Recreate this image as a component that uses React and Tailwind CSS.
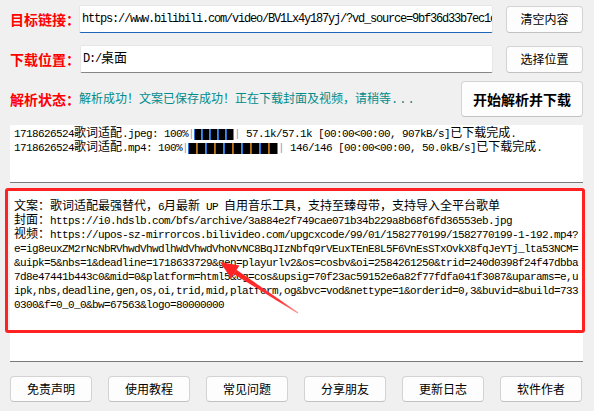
import React from "react";

// CJK runs get their own size so ASCII stays half-width like the reference
const CJK = /([\u2E80-\u9FFF\u3000-\u303F\uFF00-\uFFEF]+)/;

const Mixed = ({ text }) =>
  text.split(CJK).map((part, i) =>
    i % 2 === 1 ? (
      <span key={i} className="text-[12px] tracking-normal">
        {part}
      </span>
    ) : (
      <span key={i}>{part}</span>
    )
  );

const Btn = ({ children, className = "" }) => (
  <button
    className={
      "flex items-center justify-center bg-[#fdfdfd] border border-[#d3d3d3] border-b-[#c2c2c2] rounded-[4px] text-[12px] text-black font-['Noto_Sans_CJK_SC',sans-serif] " +
      className
    }
  >
    {children}
  </button>
);

const Label = ({ children }) => (
  <div className="w-[69px] shrink-0 whitespace-nowrap text-[14px] font-bold text-[#ff0000] font-['Noto_Sans_CJK_SC',sans-serif]">
    {children}
  </div>
);

const Bars = ({ count, wide }) => (
  <span className="inline-flex items-center align-middle h-[14px]">
    {Array.from({ length: count }).map((_, i) => (
      <span
        key={i}
        className={
          "inline-block h-[11px] bg-black border-l border-l-[#2d74d0] border-r border-r-[#b8741e] " +
          (wide ? "w-[9px]" : "w-[8px]")
        }
      />
    ))}
  </span>
);

const logLines = [
  { name: "1718626524歌词适配.jpeg: 100%", bars: 5, wide: false, rest: " 57.1k/57.1k [00:00<00:00, 907kB/s]已下载完成." },
  { name: "1718626524歌词适配.mp4: 100%", bars: 10, wide: true, rest: " 146/146 [00:00<00:00, 50.0kB/s]已下载完成." },
];

const textLines = [
  "文案：歌词适配最强替代，6月最新 UP 自用音乐工具，支持至臻母带，支持导入全平台歌单",
  "封面：https://i0.hdslb.com/bfs/archive/3a884e2f749cae071b34b229a8b68f6fd36553eb.jpg",
  "视频：https://upos-sz-mirrorcos.bilivideo.com/upgcxcode/99/01/1582770199/1582770199-1-192.mp4?",
  "e=ig8euxZM2rNcNbRVhwdVhwdlhWdVhwdVhoNvNC8BqJIzNbfq9rVEuxTEnE8L5F6VnEsSTxOvkX8fqJeYTj_lta53NCM=",
  "&uipk=5&nbs=1&deadline=1718633729&gen=playurlv2&os=cosbv&oi=2584261250&trid=240d0398f24f47dbba",
  "7d8e47441b443c0&mid=0&platform=html5&og=cos&upsig=70f23ac59152e6a82f77fdfa041f3087&uparams=e,u",
  "ipk,nbs,deadline,gen,os,oi,trid,mid,platform,og&bvc=vod&nettype=1&orderid=0,3&buvid=&build=733",
  "0300&f=0_0_0&bw=67563&logo=80000000",
];

const bottomButtons = ["免责声明", "使用教程", "常见问题", "分享朋友", "更新日志", "软件作者"];

export default function App() {
  return (
    <div className="relative w-[594px] h-[411px] overflow-hidden bg-[#f0f0f0]">
      <div className="pt-[5px] pl-[10px] pr-[11px]">
        {/* link row */}
        <div className="flex items-center h-[28px]">
          <Label>目标链接：</Label>
          <div className="flex-1 h-[28px] flex items-center overflow-hidden whitespace-nowrap bg-white border border-[#e6e6e6] border-b-[#1d65b8] rounded-[2px] pl-[2px] text-[12px] tracking-[-1.2px] font-['Liberation_Mono',monospace] text-black">
            https://www.bilibili.com/video/BV1Lx4y187yj/?vd_source=9bf36d33b7ec1c
          </div>
          <Btn className="ml-[13px] w-[77px] h-[27px]">清空内容</Btn>
        </div>

        {/* download path row */}
        <div className="flex items-center h-[28px] mt-[12px]">
          <Label>下载位置：</Label>
          <div className="flex-1 ml-[1px] h-[28px] flex items-center bg-white border border-[#e6e6e6] border-b-[#868686] rounded-[2px] pl-[2px] text-[12px] tracking-[-1.2px] font-['Liberation_Mono','Noto_Sans_CJK_SC',monospace] text-black">
            D:/<span className="text-[13px] tracking-normal">桌面</span>
          </div>
          <Btn className="ml-[13px] w-[77px] h-[27px]">选择位置</Btn>
        </div>

        {/* status row */}
        <div className="flex items-center h-[36px] mt-[8px]">
          <Label>解析状态：</Label>
          <div className="flex-1 text-[12px] text-[#008b8b] font-['Noto_Sans_CJK_SC',sans-serif]">
            解析成功！文案已保存成功！正在下载封面及视频，请稍等
            <span className="font-['Liberation_Mono',monospace] tracking-[1px]">...</span>
          </div>
          <Btn className="w-[122px] h-[36px] text-[14px] font-bold">开始解析并下载</Btn>
        </div>

        {/* progress log */}
        <div className="mt-[8px] h-[58px] bg-white border-b border-[#7a7a7a] pt-[2px] pl-[4px] text-[11px] tracking-[-0.6px] text-black font-['Liberation_Mono','Noto_Sans_CJK_SC',monospace]">
          {logLines.map((l, i) => (
            <div key={i} className="h-[14px] leading-[14px] whitespace-pre">
              <Mixed text={l.name} />
              <span className="text-[#7fa3cc]">|</span>
              <Bars count={l.bars} wide={l.wide} />
              <span className="text-[#7fa3cc]">|</span>
              <Mixed text={l.rest} />
            </div>
          ))}
        </div>

        {/* result text */}
        <div className="mt-[7px] h-[172px] bg-white border-b border-[#7a7a7a] pt-[10px] pl-[4px] text-[11px] tracking-[-0.6px] text-black font-['Liberation_Mono','Noto_Sans_CJK_SC',monospace]">
          {textLines.map((t, i) => (
            <div key={i} className="h-[14px] leading-[14px] whitespace-pre">
              <Mixed text={t} />
            </div>
          ))}
        </div>

        {/* bottom buttons */}
        <div className="mt-[14px] w-[572px] grid grid-cols-6 gap-[16px]">
          {bottomButtons.map((b) => (
            <Btn key={b} className="h-[26px]">
              {b}
            </Btn>
          ))}
        </div>
      </div>

      {/* red annotation box */}
      <div className="absolute left-[5px] top-[188px] w-[580px] h-[145px] border-[3px] border-[#ff2222] rounded-[3px] pointer-events-none" />

      {/* red annotation arrow */}
      <svg className="absolute left-0 top-0 pointer-events-none" width="594" height="411" viewBox="0 0 594 411">
        <defs>
          <linearGradient id="fade" x1="235" y1="272" x2="298" y2="313" gradientUnits="userSpaceOnUse">
            <stop offset="0" stopColor="#ff2222" />
            <stop offset="0.7" stopColor="#ff3333" />
            <stop offset="1" stopColor="#ff9999" />
          </linearGradient>
        </defs>
        <polygon points="233.6,274 236.4,269.8 298.3,312.6 297.7,313.4" fill="url(#fade)" />
        <polygon points="220,262 239.5,265.6 231,278.2" fill="#ff2222" />
      </svg>
    </div>
  );
}
